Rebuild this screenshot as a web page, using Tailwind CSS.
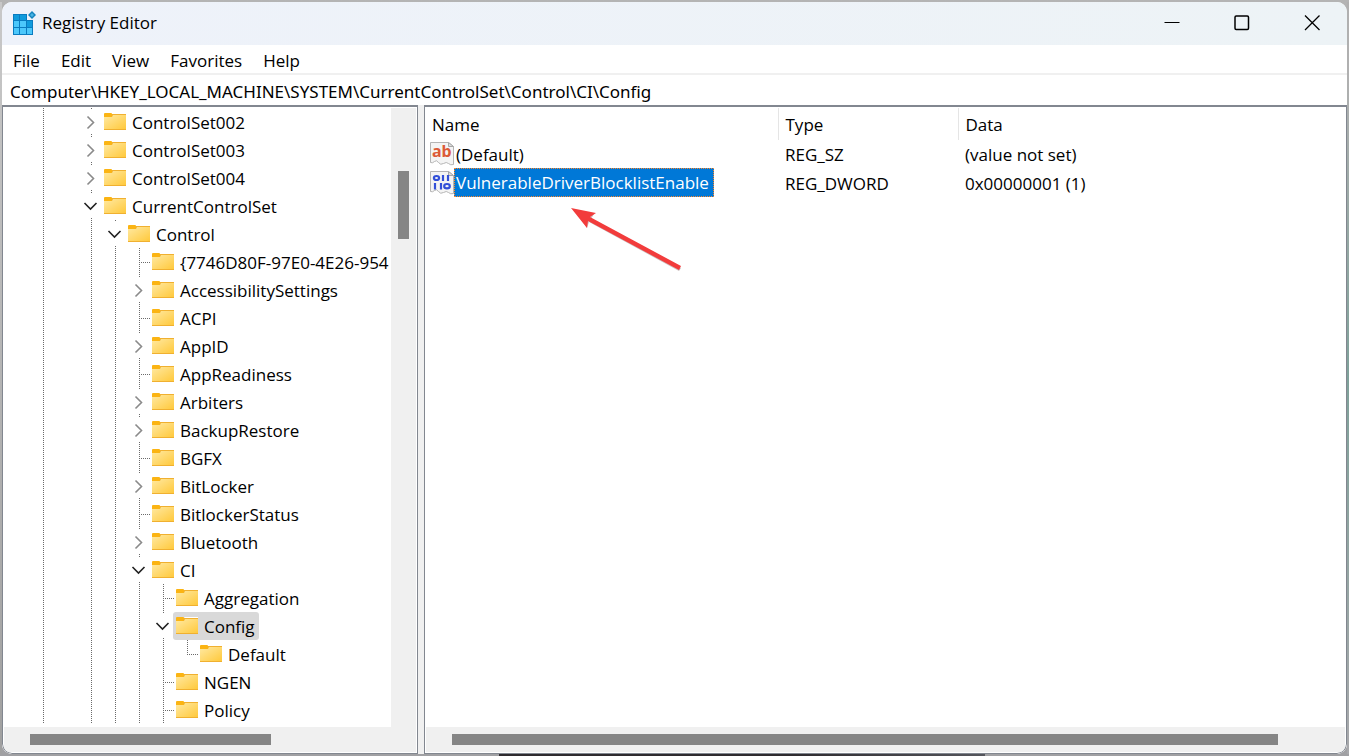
<!doctype html>
<html lang="en">
<head>
  <meta charset="utf-8" />
  <meta name="viewport" content="width=device-width, initial-scale=1" />
  <title>Registry Editor</title>
  <script src="https://cdn.jsdelivr.net/npm/@tailwindcss/browser@4"></script>
</head>
<body class="flex h-screen flex-col overflow-hidden bg-linear-to-b from-[#b4b4b4] to-[#a0a0a3] pt-[2px] font-['Open_Sans',sans-serif] text-[17px] leading-[26px] text-black">
  <div class="flex min-h-0 flex-1">
    <div class="w-[2px] shrink-0 bg-linear-to-b from-[#c8c8c8] to-[#a0a0a0]"></div>
    <div id="window" class="relative flex min-w-0 flex-1 flex-col overflow-hidden rounded-[10px] bg-white">
      <!-- title bar -->
      <header class="flex h-[43px] shrink-0 items-center justify-between bg-linear-to-r from-[#eef2fa] to-[#edf3f6] pl-[10px]">
        <div class="flex items-center gap-[6px] pb-[2px]">
          <svg class="h-6 w-6" viewBox="0 0 24 24" aria-hidden="true">
            <rect x="1" y="3" width="20" height="21" fill="#0a7cc0" />
            <path fill="#4cc8fb" d="M2 10h5v6H2zM8 10h6v6H8zM2 17h5v6H2zM8 17h6v6H8zM15 17h5v6h-5z" />
            <path fill="#109bdc" d="M2 4h5v5H2zM8 4h6v5H8zM15 10h5v6h-5z" />
            <path fill="#eef2fa" d="M15 1h7v8h-7z" />
            <path fill="#1583bd" d="M20 0l4 4-4 4-4-4z" />
            <path fill="#48b4e4" d="M20 2l2 2-2 2-2-2z" />
          </svg>
          <h1>Registry Editor</h1>
        </div>
        <div class="flex h-full pb-[2px]">
          <button class="grid w-[70px] place-items-center" type="button" aria-label="Minimize">
            <svg class="h-4 w-4" viewBox="0 0 16 16" fill="none" stroke="#000"><path d="M.5 7.500h15" /></svg>
          </button>
          <button class="grid w-[70px] place-items-center" type="button" aria-label="Maximize">
            <svg class="h-4 w-4" viewBox="0 0 16 16" fill="none" stroke="#000" stroke-width="1.500"><rect x="1" y="1" width="13.500" height="13.500" rx="1.200" /></svg>
          </button>
          <button class="grid w-[70px] place-items-center" type="button" aria-label="Close">
            <svg class="h-4 w-4" viewBox="0 0 16 16" fill="none" stroke="#000" stroke-width="1.300"><path d="M1 .5l14.500 14.500M15.500.5L1 15" /></svg>
          </button>
        </div>
      </header>

      <!-- menu -->
      <nav class="flex h-7 shrink-0 items-center gap-[21px] px-[11px] pt-1">
        <button type="button">File</button>
        <button type="button">Edit</button>
        <button type="button">View</button>
        <button type="button">Favorites</button>
        <button type="button">Help</button>
      </nav>

      <!-- address bar -->
      <input class="h-8 w-full shrink-0 border-t-2 border-[#f0f0f0] px-2 pt-[2px] font-['Noto_Sans',sans-serif] outline-none" aria-label="Address" value="Computer\HKEY_LOCAL_MACHINE\SYSTEM\CurrentControlSet\Control\CI\Config" />

      <div class="flex min-h-0 flex-1 bg-[#f0f0f0]">
        <!-- key tree -->
        <section class="flex w-[416px] shrink-0 flex-col overflow-hidden rounded-bl-[10px] border border-t-2 border-[#828790] bg-white p-px pt-0">
          <div class="flex min-h-0 flex-1 pt-px">
            <ul id="tree" role="tree" class="min-w-0 flex-1 overflow-hidden pl-[27px]"></ul>
            <div class="w-[25px] shrink-0 bg-[#f0f0f0] pt-[63px] pl-[7px]">
              <div class="h-[68px] w-[11px] bg-[#858585]"></div>
            </div>
          </div>
          <div class="flex h-[25px] shrink-0 items-center bg-[#f0f0f0] pl-[26px]">
            <div class="h-[11px] w-[241px] bg-[#858585]"></div>
          </div>
        </section>

        <!-- values -->
        <section class="ml-[6px] flex min-w-0 flex-1 flex-col overflow-hidden rounded-br-[10px] border border-t-2 border-[#828790] bg-white p-px pt-0">
          <div class="min-h-0 flex-1 pt-px">
            <table class="w-full table-fixed border-collapse text-left">
              <thead>
                <tr class="h-8">
                  <th class="w-[352px] border-r border-[#e5e5e5] pt-[2px] pl-[6px] font-normal">Name</th>
                  <th class="w-[180px] border-r border-[#e5e5e5] pt-[2px] pl-[7px] font-normal">Type</th>
                  <th class="pt-[2px] pl-[7px] font-normal">Data</th>
                </tr>
              </thead>
              <tbody>
                <tr class="h-7">
                  <td>
                    <div class="flex items-center pl-[4px]">
                      <svg class="h-6 w-6 shrink-0" viewBox="0 0 24 24" aria-hidden="true">
                        <path fill="#f4f4f4" stroke="#b4b4b4" d="M.5.5h18l5 4v18q-3 1-5-1t-5 0-5-1-4-1-4 1z" />
                        <path fill="#ddd" stroke="#a8a8a8" d="M18.500.5v4h5z" />
                        <text x="2" y="15" font-family="Noto Sans, sans-serif" font-size="16" font-weight="700" fill="#dc5b38">ab</text>
                      </svg>
                      <span class="px-[2px] pt-[2px]">(Default)</span>
                    </div>
                  </td>
                  <td class="pt-[2px] pl-[7px]">REG_SZ</td>
                  <td class="pt-[2px] pl-[7px]">(value not set)</td>
                </tr>
                <tr class="h-[29px]">
                  <td>
                    <div class="flex items-center pl-[4px]">
                      <svg class="h-6 w-6 shrink-0" viewBox="0 0 24 24" aria-hidden="true">
                        <path fill="#f4f4f4" stroke="#b4b4b4" d="M.5.5h18l5 4v18q-3 1-5-1t-5 0-5-1-4-1-4 1z" />
                        <path fill="#ddd" stroke="#a8a8a8" d="M18.500.5v4h5z" />
                        <g fill="none" stroke="#3350d8" stroke-width="2.200">
                          <ellipse cx="6.500" cy="7" rx="2.600" ry="2" />
                          <path d="M13 4v6M18 4v6M5 12v6.500M11 12v6.500" />
                          <ellipse cx="17" cy="15.200" rx="2.800" ry="2.200" />
                        </g>
                      </svg>
                      <span class="border border-dotted border-[#ff8728] bg-[#0078d7] pt-px pr-[4px] pl-px text-white">VulnerableDriverBlocklistEnable</span>
                    </div>
                  </td>
                  <td class="pt-[2px] pl-[7px]">REG_DWORD</td>
                  <td class="pt-[2px] pl-[7px]">0x00000001 (1)</td>
                </tr>
              </tbody>
            </table>
          </div>
          <div class="flex h-[25px] shrink-0 items-center bg-[#f0f0f0] pr-[67px] pl-[26px]">
            <div class="h-[11px] flex-1 bg-[#858585]"></div>
          </div>
        </section>
      </div>

      <!-- pointer drawn over the value list -->
      <svg class="absolute top-[203px] left-[566px] h-[68px] w-[116px]" viewBox="0 0 116 68" aria-hidden="true">
        <path fill="#9a8080" opacity=".5" d="M6 5l20 4-3 5 90 49-2 3-90-49-2 6z" />
        <path fill="#f23c3c" d="M3 3l25 5-6 4 91 49-2 4-91-49-1 7z" />
      </svg>
    </div>
    <div class="w-[2px] shrink-0 bg-linear-to-b from-[#b0b0b0] from-10% via-[#7fa19a] via-50% to-[#a8a8ab]"></div>
  </div>
  <!-- desktop below the window -->
  <div class="flex h-[2px] shrink-0">
    <div class="w-[37%]"></div>
    <div class="w-[36%] bg-linear-to-r from-[#2e2b2f] from-60% to-[#55565c]"></div>
  </div>

  <script>
    // guides: one letter per 24px column. v line, t tee, l elbow, > closed, d open, - empty
    const keys = [
      ['v->', 'ControlSet002'],
      ['v->', 'ControlSet003'],
      ['v->', 'ControlSet004'],
      ['v-d', 'CurrentControlSet'],
      ['v-vd', 'Control'],
      ['v-vvt', '{7746D80F-97E0-4E26-954'],
      ['v-vv>', 'AccessibilitySettings'],
      ['v-vvt', 'ACPI'],
      ['v-vv>', 'AppID'],
      ['v-vvt', 'AppReadiness'],
      ['v-vv>', 'Arbiters'],
      ['v-vv>', 'BackupRestore'],
      ['v-vvt', 'BGFX'],
      ['v-vv>', 'BitLocker'],
      ['v-vvt', 'BitlockerStatus'],
      ['v-vv>', 'Bluetooth'],
      ['v-vvd', 'CI'],
      ['v-vvvt', 'Aggregation'],
      ['v-vvvd', 'Config'],
      ['v-vvvvl', 'Default'],
      ['v-vvvt', 'NGEN'],
      ['v-vvvt', 'Policy'],
    ];
    const selected = 'Config';

    const line = (d) => `<svg class="h-7 w-6 shrink-0" viewBox="0 0 24 28" fill="none" stroke="#6a6a6a" stroke-dasharray="1 1" aria-hidden="true"><path d="${d}"/></svg>`;
    const toggle = (open) => `<button class="h-7 w-6 shrink-0" type="button" aria-label="${open ? 'Collapse' : 'Expand'}">
      <svg class="h-7 w-6" viewBox="0 0 24 28" fill="none">
        <path stroke="#6a6a6a" stroke-dasharray="1 1" d="M12.500 0v2M12.500 26v2"/>
        ${open ? '<path stroke="#222" stroke-width="1.600" d="M5.500 11l6 6 6-6"/>' : '<path stroke="#8a8a8a" stroke-width="1.600" d="M8.500 8.500l6 6-6 6"/>'}
      </svg></button>`;
    const cells = {
      'v': line('M12.500 0v28'),
      't': line('M12.500 0v28M14 14.500h9'),
      'l': line('M12.500 0v14M12 14.500h11'),
      '-': '<span class="w-6 shrink-0"></span>',
      '>': toggle(false),
      'd': toggle(true),
    };
    const folder = `<svg class="h-[18px] w-[22px] shrink-0" viewBox="0 0 22 18" aria-hidden="true">
      <defs><linearGradient id="fold" x1="0" y1="0" x2="1" y2="1"><stop stop-color="#ffe9a2"/><stop offset="1" stop-color="#ffc93c"/></linearGradient></defs>
      <path fill="#f0b030" d="M0 1h22v16H0z"/>
      <path fill="#fff" d="M8 0h14v1H9z"/>
      <path fill="url(#fold)" d="M0 4h8l1-2h13v14H0z"/>
      <path fill="#fbb413" d="M0 1q0-1 1-1h6q1 0 1 1v2l-1 1H0z"/>
    </svg>`;

    document.getElementById('tree').innerHTML = keys.map(([guides, name]) => `
      <li role="treeitem" class="flex h-7 items-center whitespace-nowrap">
        ${[...guides].map((g) => cells[g]).join('')}
        <span class="flex h-7 items-center gap-[6px] rounded-[3px] pr-1 ${name === selected ? '-ml-[2px] bg-[#d9d9d9] pl-[3px]' : 'pl-px'}">
          ${folder}<span class="pt-[2px]">${name}</span>
        </span>
      </li>`).join('');
  </script>
</body>
</html>
